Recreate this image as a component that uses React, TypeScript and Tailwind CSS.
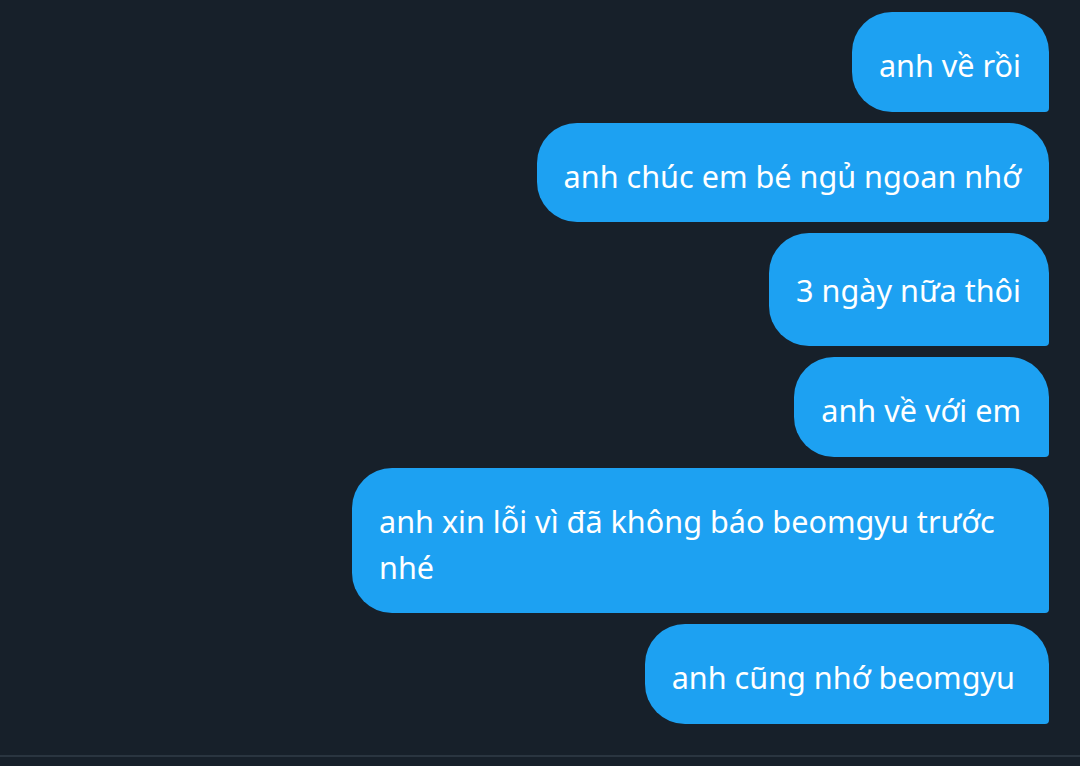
import React from 'react';

interface Message {
    id: number;
    text: string;
    tall?: boolean;
    wideRight?: boolean;
}

const messages: Message[] = [
    { id: 1, text: 'anh về rồi' },
    { id: 2, text: 'anh chúc em bé ngủ ngoan nhớ' },
    { id: 3, text: '3 ngày nữa thôi', tall: true },
    { id: 4, text: 'anh về với em' },
    { id: 5, text: 'anh xin lỗi vì đã không báo beomgyu trước nhé' },
    { id: 6, text: 'anh cũng nhớ beomgyu', wideRight: true },
];

export default function App() {
    return (
        <div className="w-[1080px] h-[766px] bg-[#17202a] flex flex-col overflow-hidden" style={{ fontFamily: '"Noto Sans", "Open Sans", sans-serif' }}>
            <div className="flex-1 flex flex-col items-end gap-[11px] pt-[12px] pr-[31px]">
                {messages.map((m) => (
                    <div
                        key={m.id}
                        className={`max-w-[697px] bg-[#1da1f2] text-white text-[30.6px] leading-[46px] pl-[27px] rounded-tl-[40px] rounded-tr-[40px] rounded-bl-[40px] rounded-br-[4px] ${m.tall ? 'pt-[34px] pb-[33px]' : 'pt-[30px] pb-[23.5px]'} ${m.wideRight ? 'pr-[34px]' : 'pr-[28px]'}`}
                    >
                        {m.text}
                    </div>
                ))}
            </div>
            <div className="h-[2px] bg-[#2a3540] mb-[9px]" />
        </div>
    );
}
